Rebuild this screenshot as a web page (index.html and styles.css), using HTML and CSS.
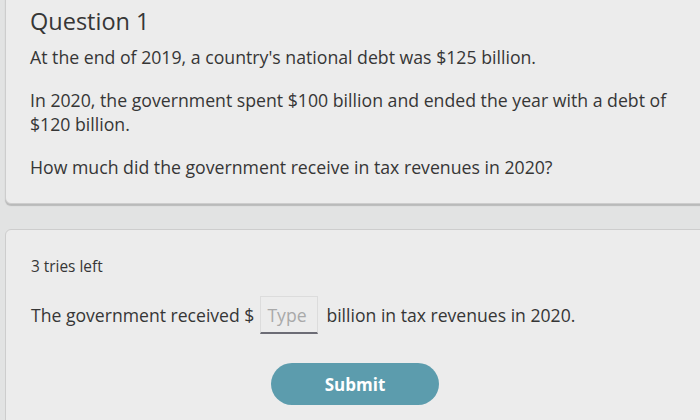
FILE: index.html
```html
<!DOCTYPE html>
<html lang="en">
<head>
    <meta charset="UTF-8">
    <meta name="viewport" content="width=device-width, initial-scale=1.0">
    <title>Question 1</title>
    <link rel="stylesheet" href="styles.css">
</head>
<body>
    <div class="page">
        <section class="card question">
            <h1>Question 1</h1>
            <p>At the end of 2019, a country's national debt was $125 billion.</p>
            <p>In 2020, the government spent $100 billion and ended the year with a debt of $120 billion.</p>
            <p>How much did the government receive in tax revenues in 2020?</p>
        </section>

        <section class="card answer">
            <div class="tries">3 tries left</div>
            <div class="answer-line">
                <span>The government received $</span>
                <input type="text" class="blank" placeholder="Type">
                <span>billion in tax revenues in 2020.</span>
            </div>
            <div class="actions">
                <button class="submit-btn">Submit</button>
            </div>
        </section>
    </div>
</body>
</html>
```

FILE: styles.css
```css
body, html {
    margin: 0;
    padding: 0;
    font-family: "Open Sans", Arial, sans-serif;
    background-color: #e2e3e3;
    color: #363636;
    overflow: hidden;
}
.page {
    padding-left: 5px;
    width: 740px;
}
.card {
    background-color: #ececec;
    border: 1px solid #cdcdcd;
    border-radius: 6px;
    box-sizing: border-box;
}
.question {
    margin-top: -10px;
    padding: 13px 70px 24px 24px;
    box-shadow: 0 2px 1px rgba(0,0,0,0.18);
}
.question h1 {
    margin: 0 0 7px 0;
    font-size: 23.5px;
    font-weight: 400;
    line-height: 34px;
}
.question p {
    margin: 0 0 19px 0;
    font-size: 17.7px;
    line-height: 24px;
}
.question p:last-child {
    margin-bottom: 0;
}
.answer {
    margin-top: 25px;
    padding: 25px 25px 40px 25px;
    min-height: 220px;
}
.tries {
    font-size: 15.4px;
    line-height: 22px;
    margin-top: 1px;
}
.answer-line {
    display: flex;
    align-items: center;
    margin-top: 18px;
    font-size: 17.6px;
    line-height: 24px;
}
.blank {
    width: 58px;
    height: 38px;
    margin: 0 8px 0 6px;
    padding: 0 6px;
    box-sizing: border-box;
    border: 1px solid #dcdcdc;
    border-bottom: 2px solid #6c6c75;
    background: transparent;
    font-family: inherit;
    font-size: 17.6px;
}
.blank::placeholder {
    color: #a9a9a9;
}
.actions {
    display: flex;
    justify-content: center;
    margin-top: 29px;
    padding-right: 40px;
}
.submit-btn {
    width: 168px;
    height: 42px;
    border: none;
    border-radius: 21px;
    background-color: #5c9cad;
    color: white;
    font-family: inherit;
    font-size: 17px;
    font-weight: 700;
    cursor: pointer;
}
```
